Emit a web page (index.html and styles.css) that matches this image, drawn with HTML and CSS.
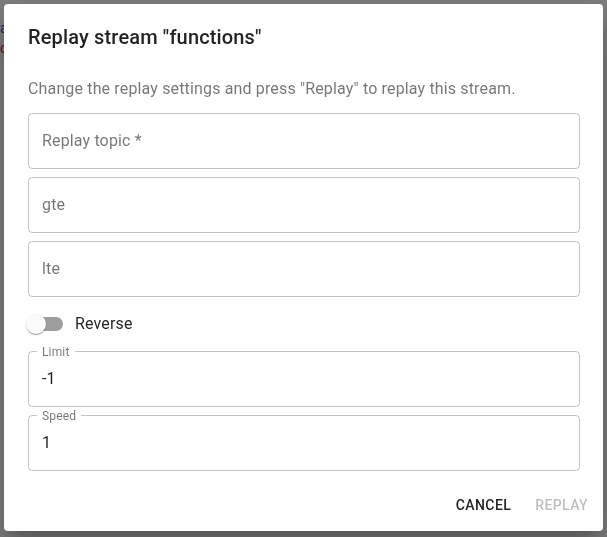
FILE: index.html
```html
<!DOCTYPE html>
<html lang="en">
<head>
<meta charset="utf-8">
<title>Replay stream</title>
<link rel="stylesheet" href="styles.css">
</head>
<body>
<div class="page">
  <div class="page-line page-blue">a</div>
  <div class="page-line page-red">c</div>
</div>
<div class="backdrop">
  <div class="dialog" role="dialog" aria-labelledby="dlg-title">
    <h2 class="title" id="dlg-title">Replay stream "functions"</h2>
    <div class="content">
      <p class="desc">Change the replay settings and press "Replay" to replay this stream.</p>
      <div class="field"><span class="placeholder">Replay topic *</span></div>
      <div class="field"><span class="placeholder">gte</span></div>
      <div class="field"><span class="placeholder">lte</span></div>
      <label class="switch-row">
        <span class="switch"><span class="track"></span><span class="thumb"></span></span>
        <span class="switch-label">Reverse</span>
      </label>
      <div class="field filled"><span class="float-label">Limit</span><span class="value">-1</span></div>
      <div class="field filled"><span class="float-label">Speed</span><span class="value">1</span></div>
    </div>
    <div class="actions">
      <button class="btn">Cancel</button>
      <button class="btn" disabled>Replay</button>
    </div>
  </div>
</div>
</body>
</html>
```

FILE: styles.css
```css
* { box-sizing: border-box; }
html, body { margin: 0; padding: 0; }
body {
  width: 607px;
  height: 537px;
  overflow: hidden;
  font-family: Roboto, "Noto Sans", Arial, sans-serif;
  background: #fff;
}
.page {
  padding: 18px 0 0 0;
  font-size: 14px;
  line-height: 20px;
}
.page-line { white-space: nowrap; }
.page-blue { color: #3949ab; }
.page-red { color: #c62828; }

.backdrop {
  position: fixed;
  inset: 0;
  background: rgba(0, 0, 0, 0.5);
  display: flex;
  padding: 4px 4px 6px 4px;
}
.dialog {
  width: 599px;
  height: 527px;
  background: #fff;
  border-radius: 4px;
  box-shadow: 0px 11px 15px -7px rgba(0,0,0,0.2), 0px 24px 38px 3px rgba(0,0,0,0.14), 0px 9px 46px 8px rgba(0,0,0,0.12);
  display: flex;
  flex-direction: column;
}
.title {
  margin: 0;
  padding: 17px 24px 0 24px;
  font-size: 20px;
  font-weight: 500;
  line-height: 32px;
  letter-spacing: 0.0075em;
  color: rgba(0, 0, 0, 0.87);
}
.content {
  padding: 24px 23px 0 24px;
  display: flex;
  flex-direction: column;
}
.desc {
  margin: 0 0 12px 0;
  font-size: 16px;
  line-height: 24px;
  letter-spacing: 0.00938em;
  color: rgba(0, 0, 0, 0.54);
}
.field {
  position: relative;
  height: 56px;
  border: 1px solid rgba(0, 0, 0, 0.23);
  border-radius: 4px;
  display: flex;
  align-items: center;
  padding: 0 0 1px 13px;
  margin-bottom: 8px;
  font-size: 16px;
  letter-spacing: 0.00938em;
}
.placeholder { color: rgba(0, 0, 0, 0.54); }
.value { color: rgba(0, 0, 0, 0.87); }
.float-label {
  position: absolute;
  top: -6px;
  left: 8px;
  padding: 0 5px;
  background: #fff;
  font-size: 12px;
  line-height: 12px;
  color: rgba(0, 0, 0, 0.54);
}
.switch-row {
  display: flex;
  align-items: center;
  margin: 0 0 8px -11px;
  height: 38px;
  cursor: pointer;
}
.switch {
  display: grid;
  width: 58px;
  height: 38px;
  flex: none;
}
.track {
  grid-area: 1 / 1;
  margin: 12px;
  border-radius: 7px;
  background: rgba(0, 0, 0, 0.38);
}
.thumb {
  grid-area: 1 / 1;
  margin: 9px;
  width: 20px;
  height: 20px;
  border-radius: 50%;
  background: #fafafa;
  box-shadow: 0px 2px 1px -1px rgba(0,0,0,0.2), 0px 1px 1px 0px rgba(0,0,0,0.14), 0px 1px 3px 0px rgba(0,0,0,0.12);
}
.switch-label {
  font-size: 16px;
  line-height: 24px;
  letter-spacing: 0.00938em;
  color: rgba(0, 0, 0, 0.87);
}
.actions {
  margin-top: auto;
  padding: 8px 7px 8px 8px;
  display: flex;
  justify-content: flex-end;
  gap: 8px;
  margin-bottom: 1px;
}
.btn {
  min-width: 64px;
  height: 36px;
  padding: 6px 8px;
  border: 0;
  background: transparent;
  font-family: Roboto, "Noto Sans", Arial, sans-serif;
  font-size: 14px;
  font-weight: 500;
  line-height: 24px;
  letter-spacing: 0.02857em;
  text-transform: uppercase;
  color: rgba(0, 0, 0, 0.87);
  border-radius: 4px;
}
.btn:disabled { color: rgba(0, 0, 0, 0.26); }
```
